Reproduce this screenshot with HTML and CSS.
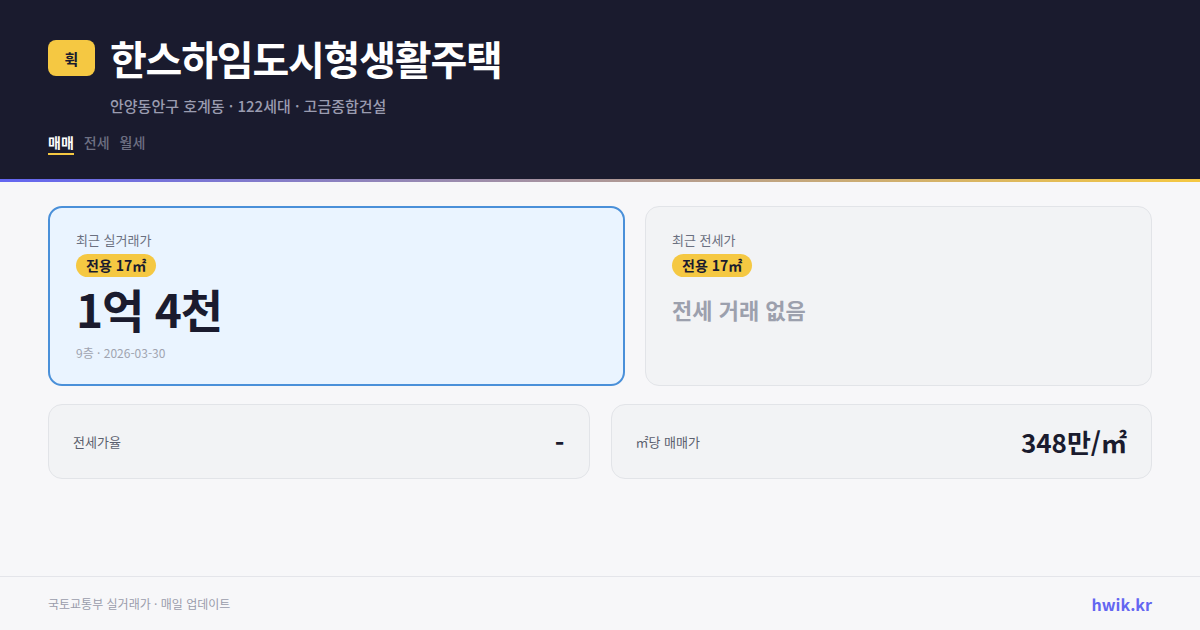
FILE: index.html
```html
<!DOCTYPE html>
<html lang="ko">
<head>
<meta charset="utf-8">
<link rel="stylesheet" href="styles.css">
</head>
<body>
<div class="page">
  <header class="hero">
    <div class="title-row">
      <div class="logo">휙</div>
      <h1 class="title">한스하임도시형생활주택</h1>
    </div>
    <div class="subtitle">안양동안구 호계동 · 122세대 · 고금종합건설</div>
    <nav class="tabs">
      <span class="tab active">매매</span>
      <span class="tab">전세</span>
      <span class="tab">월세</span>
    </nav>
  </header>
  <div class="accent"></div>
  <main class="content">
    <div class="top-row">
      <section class="card card-primary">
        <div class="label">최근 실거래가</div>
        <span class="badge">전용 17㎡</span>
        <div class="price">1억 4천</div>
        <div class="meta">9층 · 2026-03-30</div>
      </section>
      <section class="card card-muted">
        <div class="label">최근 전세가</div>
        <span class="badge">전용 17㎡</span>
        <div class="empty">전세 거래 없음</div>
      </section>
    </div>
    <div class="bottom-row">
      <section class="stat">
        <span class="stat-label">전세가율</span>
        <span class="stat-value">-</span>
      </section>
      <section class="stat">
        <span class="stat-label">㎡당 매매가</span>
        <span class="stat-value">348만/㎡</span>
      </section>
    </div>
  </main>
  <footer class="footer">
    <span class="source">국토교통부 실거래가 · 매일 업데이트</span>
    <span class="brand">hwik.kr</span>
  </footer>
</div>
</body>
</html>
```
FILE: styles.css
```css
* { box-sizing: border-box; }
html, body { margin: 0; padding: 0; }
body {
  width: 1200px;
  height: 630px;
  overflow: hidden;
  background: #f7f7f9;
  font-family: "Noto Sans CJK KR", "Noto Sans", sans-serif;
  color: #1a1b2e;
}
.page {
  display: flex;
  flex-direction: column;
  height: 630px;
}
.hero {
  background: #1a1b2e;
  padding: 33px 48px 0;
  height: 179px;
}
.title-row {
  display: flex;
  align-items: center;
  gap: 15px;
}
.logo {
  width: 47px;
  height: 36px;
  border-radius: 8px;
  background: #f5c842;
  color: #1a1b2e;
  font-weight: 700;
  font-size: 15px;
  display: flex;
  align-items: center;
  justify-content: center;
}
.title {
  margin: 0;
  color: #ffffff;
  font-size: 40px;
  font-weight: 700;
  line-height: 50px;
  letter-spacing: -1.2px;
}
.subtitle {
  margin: 13px 0 0 62px;
  color: #9a9cb0;
  font-size: 15px;
  font-weight: 500;
  line-height: 20px;
}
.tabs {
  display: flex;
  gap: 10px;
  margin-top: 16px;
}
.tab {
  color: #6e7083;
  font-size: 14px;
  line-height: 20px;
  font-weight: 500;
  padding-bottom: 1px;
}
.tab.active {
  color: #ffffff;
  font-weight: 700;
  border-bottom: 2px solid #f5c842;
}
.accent {
  height: 3px;
  background: linear-gradient(90deg, #6366f1 0%, #f5c842 100%);
}
.content {
  flex: 1;
  padding: 24px 48px 0;
}
.top-row {
  display: grid;
  grid-template-columns: 577fr 507fr;
  gap: 20px;
}
.card {
  height: 180px;
  border-radius: 14px;
  padding: 22px 26px;
  display: flex;
  flex-direction: column;
  align-items: flex-start;
}
.card-primary {
  background: #eaf4ff;
  border: 2px solid #4a90d9;
}
.card-muted {
  background: #f2f3f5;
  border: 1px solid #e2e4e8;
  padding: 23px 26px;
}
.label {
  color: #6b7080;
  font-size: 13px;
  line-height: 20px;
}
.badge {
  margin-top: 4px;
  background: #f5c842;
  color: #1a1b2e;
  font-size: 14px;
  font-weight: 700;
  line-height: 23px;
  padding: 0 10px;
  border-radius: 12px;
}
.price {
  margin-top: 3px;
  font-size: 46px;
  font-weight: 700;
  line-height: 56px;
  letter-spacing: -1.2px;
  color: #1a1b2e;
}
.meta {
  margin-top: 8px;
  color: #a0a4b0;
  font-size: 12px;
  line-height: 18px;
}
.empty {
  margin-top: 16px;
  color: #9ca0ad;
  font-size: 22px;
  font-weight: 700;
  line-height: 32px;
}
.bottom-row {
  margin-top: 18px;
  display: grid;
  grid-template-columns: 1fr 1fr;
  gap: 21px;
}
.stat {
  height: 75px;
  background: #f2f3f5;
  border: 1px solid #e2e4e8;
  border-radius: 14px;
  padding: 0 24px;
  display: flex;
  align-items: center;
  justify-content: space-between;
}
.stat-label {
  color: #5b5f6e;
  font-size: 13px;
}
.stat-value {
  font-size: 26px;
  font-weight: 700;
  color: #1a1b2e;
}
.footer {
  height: 54px;
  border-top: 1px solid #e4e5ea;
  padding: 0 48px;
  display: flex;
  align-items: center;
  justify-content: space-between;
}
.source {
  color: #9a9cab;
  font-size: 12px;
}
.brand {
  color: #6366f1;
  font-size: 16px;
  font-weight: 700;
}
```
